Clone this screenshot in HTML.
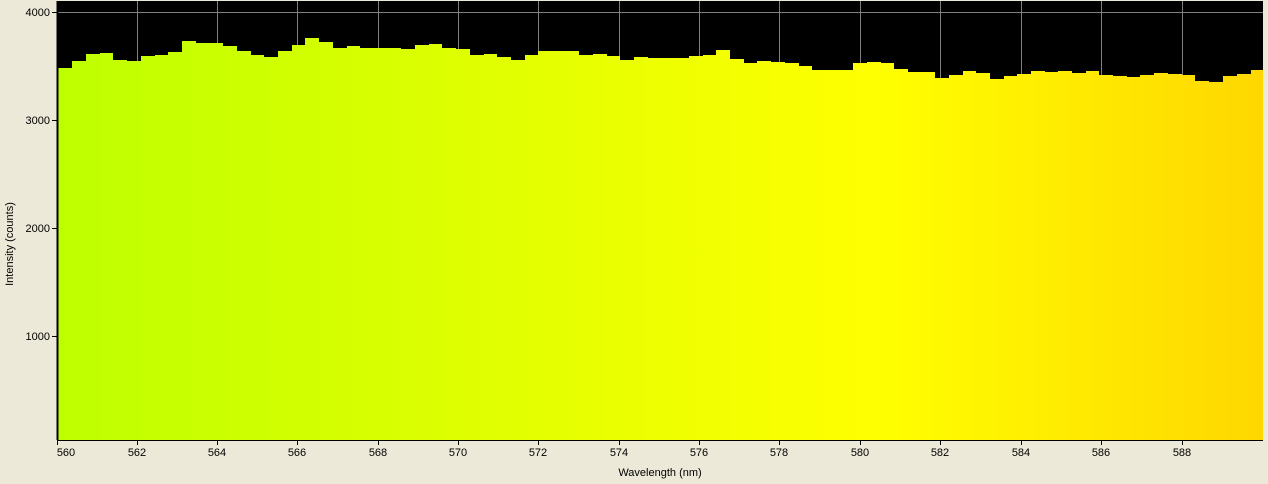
<!DOCTYPE html>
<html><head><meta charset="utf-8"><style>
html,body{margin:0;padding:0;background:#ECE9D8;width:1268px;height:484px;overflow:hidden}
svg{display:block}
text{font-family:"Liberation Sans",sans-serif;font-size:11px;fill:#000}
</style></head><body>
<svg width="1268" height="484" viewBox="0 0 1268 484">
<defs><linearGradient id="g" x1="58" x2="1263" y1="0" y2="0" gradientUnits="userSpaceOnUse">
<stop offset="0" stop-color="#BEFF00"/><stop offset="0.68" stop-color="#FFFF00"/><stop offset="1" stop-color="#FFD700"/>
</linearGradient></defs>
<rect x="57" y="1" width="1206" height="439" fill="#000"/>
<g stroke="#808080" stroke-width="1">
<line x1="57" x2="1263" y1="12.5" y2="12.5"/>
<line x1="137.5" x2="137.5" y1="1" y2="440"/><line x1="217.5" x2="217.5" y1="1" y2="440"/>
<line x1="297.5" x2="297.5" y1="1" y2="440"/><line x1="378.5" x2="378.5" y1="1" y2="440"/>
<line x1="458.5" x2="458.5" y1="1" y2="440"/><line x1="538.5" x2="538.5" y1="1" y2="440"/>
<line x1="619.5" x2="619.5" y1="1" y2="440"/><line x1="699.5" x2="699.5" y1="1" y2="440"/>
<line x1="779.5" x2="779.5" y1="1" y2="440"/><line x1="860.5" x2="860.5" y1="1" y2="440"/>
<line x1="940.5" x2="940.5" y1="1" y2="440"/><line x1="1021.5" x2="1021.5" y1="1" y2="440"/>
<line x1="1101.5" x2="1101.5" y1="1" y2="440"/><line x1="1182.5" x2="1182.5" y1="1" y2="440"/>
</g>
<path fill="url(#g)" d="M58,440 V68 H72 V61 H86 V54 H100 V53 H113 V60 H127 V61 H141 V56 H155 V55 H168 V52 H182 V41 H196 V43 H210 V43 H223 V46 H237 V51 H251 V55 H264 V57 H278 V51 H292 V45 H305 V38 H319 V42 H333 V48 H347 V46 H360 V48 H374 V48 H388 V48 H401 V49 H415 V45 H429 V44 H442 V48 H456 V49 H470 V55 H484 V54 H497 V57 H511 V60 H525 V55 H538 V51 H552 V51 H566 V51 H579 V55 H593 V54 H607 V56 H620 V60 H634 V57 H648 V58 H662 V58 H675 V58 H689 V56 H703 V55 H716 V50 H730 V59 H744 V63 H757 V61 H771 V62 H785 V63 H799 V66 H812 V70 H826 V70 H840 V70 H853 V63 H867 V62 H881 V63 H894 V69 H908 V72 H922 V72 H935 V78 H949 V75 H963 V71 H976 V73 H990 V79 H1004 V76 H1017 V74 H1031 V71 H1045 V72 H1058 V71 H1072 V73 H1086 V71 H1099 V75 H1113 V76 H1127 V77 H1140 V75 H1154 V73 H1168 V74 H1182 V75 H1195 V81 H1209 V82 H1223 V76 H1237 V74 H1251 V70 H1263 V440 Z"/>
<g stroke="#000" stroke-width="1">
<line x1="57.5" x2="57.5" y1="1" y2="440" stroke-width="2"/>
<line x1="57" x2="1263" y1="440.5" y2="440.5"/>
<line x1="52" x2="57" y1="12.5" y2="12.5"/><line x1="52" x2="57" y1="120.5" y2="120.5"/>
<line x1="52" x2="57" y1="228.5" y2="228.5"/><line x1="52" x2="57" y1="336.5" y2="336.5"/>
<line x1="57.5" x2="57.5" y1="440" y2="445"/><line x1="137.5" x2="137.5" y1="440" y2="445"/>
<line x1="217.5" x2="217.5" y1="440" y2="445"/><line x1="297.5" x2="297.5" y1="440" y2="445"/>
<line x1="378.5" x2="378.5" y1="440" y2="445"/><line x1="458.5" x2="458.5" y1="440" y2="445"/>
<line x1="538.5" x2="538.5" y1="440" y2="445"/><line x1="619.5" x2="619.5" y1="440" y2="445"/>
<line x1="699.5" x2="699.5" y1="440" y2="445"/><line x1="779.5" x2="779.5" y1="440" y2="445"/>
<line x1="860.5" x2="860.5" y1="440" y2="445"/><line x1="940.5" x2="940.5" y1="440" y2="445"/>
<line x1="1021.5" x2="1021.5" y1="440" y2="445"/><line x1="1101.5" x2="1101.5" y1="440" y2="445"/>
<line x1="1182.5" x2="1182.5" y1="440" y2="445"/>
</g>
<g text-anchor="end">
<text x="50" y="16">4000</text><text x="50" y="124">3000</text>
<text x="50" y="232">2000</text><text x="50" y="340">1000</text>
</g>
<g text-anchor="middle">
<text x="66" y="456">560</text><text x="137" y="456">562</text><text x="217" y="456">564</text>
<text x="297" y="456">566</text><text x="378" y="456">568</text><text x="458" y="456">570</text>
<text x="538" y="456">572</text><text x="619" y="456">574</text><text x="699" y="456">576</text>
<text x="779" y="456">578</text><text x="860" y="456">580</text><text x="940" y="456">582</text>
<text x="1021" y="456">584</text><text x="1101" y="456">586</text><text x="1182" y="456">588</text>
<text x="660" y="476">Wavelength (nm)</text>
<text x="0" y="0" transform="translate(13,244) rotate(-90)">Intensity (counts)</text>
</g>
</svg>
</body></html>
